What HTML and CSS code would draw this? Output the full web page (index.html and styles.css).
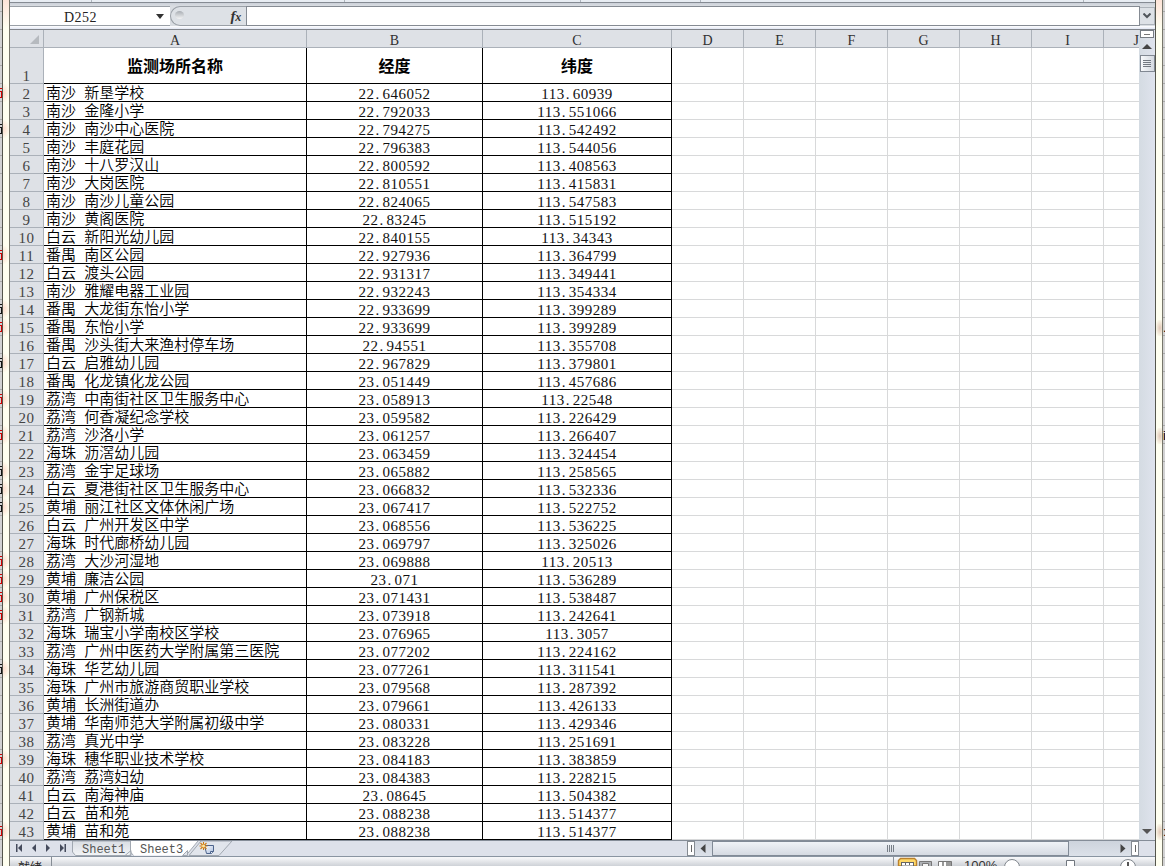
FILE: index.html
```html
<!DOCTYPE html>
<html lang="zh-CN">
<head>
<meta charset="utf-8">
<title>Sheet3</title>
<link rel="stylesheet" href="styles.css">
</head>
<body>
<div class="desktop">
  <div class="behind-left" id="behind"></div>
  <div class="frame frame-left" id="frame"></div>
  <main class="window">
    <div class="ribbon-edge"><i></i><i></i><i></i><i></i><i></i></div>
    <div class="formula-bar">
      <div class="name-box"><span>D252</span><svg width="8" height="5" viewBox="0 0 8 5"><path d="M0 0h8L4 5z" fill="#333"/></svg></div>
      <div class="fx-area"><span class="knob"></span><span class="fx">f<small>x</small></span></div>
      <div class="formula-input"></div>
      <div class="expand"><svg width="8" height="6" viewBox="0 0 8 6"><path d="M.5.5L4 4 7.500.5" fill="none" stroke="#50555b" stroke-width="2"/></svg></div>
    </div>
    <div class="work">
      <div class="sheet" id="sheet"></div>
      <div class="vscroll">
        <div class="splitter-h"><i></i></div>
        <svg class="up" width="10" height="5" viewBox="0 0 10 5"><path d="M0 5L5 0l5 5z" fill="#444"/></svg>
        <div class="vthumb"><i></i><i></i><i></i><i></i></div>
        <svg class="down" width="10" height="5" viewBox="0 0 10 5"><path d="M0 0h10L5 5z" fill="#555"/></svg>
      </div>
    </div>
    <div class="tabbar">
      <svg class="tabs" width="680" height="15" viewBox="0 0 680 15">
        <defs>
          <linearGradient id="tabFill" x2="0" y2="1"><stop stop-color="#d9dde3"/><stop offset="1" stop-color="#f2f4f7"/></linearGradient>
          <linearGradient id="pageFill" x2="1" y2="1"><stop stop-color="#fff"/><stop offset="1" stop-color="#a9bdde"/></linearGradient>
        </defs>
        <g fill="#454b5c">
          <path d="M6 3h1.500v8H6zM12 3v8L8 7zM26 3v8l-4-4zM36 3v8l4-4zM50 3v8l4-4zM54.500 3H56v8h-1.500z"/>
        </g>
        <path d="M62.500 0v11l3 3.500h54l3-4V0z" fill="url(#tabFill)" stroke="#a1a8b1"/>
        <path d="M179 14.500L191 0h31L209 14.500z" fill="#e1e5ec" stroke="#a1a8b1"/>
        <path d="M120.500 0v11l3 3.500h53L188 0z" fill="#fff"/>
        <path d="M120.500 0v11l3 3.500M176 14.500L188 0M115 14.500h6v-5z" fill="none" stroke="#a1a8b1"/>
        <path d="M172.500 14.500h5v-5z" fill="#e1e5ec" stroke="#a1a8b1"/>
        <text x="72" y="12" class="tab-label">Sheet1</text>
        <text x="130" y="12" class="tab-label">Sheet3</text>
        <path d="M194.500 4.500h9v6l-2 2h-5z" fill="url(#pageFill)" stroke="#4d648c"/>
        <path d="M200.500 12.500v-2h3" fill="#f4f7ff" stroke="#4d648c"/>
        <path d="M193.500 1v8M189.500 5h8M190.500 2l6 6M196.500 2l-6 6" stroke="#cf7c11" stroke-width="1.100"/>
        <circle cx="193.500" cy="5" r="1.500" fill="#ffe6a0"/>
      </svg>
      <div class="split-v"><i></i></div>
      <div class="hscroll">
        <svg width="6" height="9" viewBox="0 0 6 9"><path d="M5.500 0v9L.5 4.500z" fill="#444"/></svg>
        <div class="hthumb"><i></i><i></i><i></i><i></i></div>
        <svg class="right" width="6" height="9" viewBox="0 0 6 9"><path d="M.5 0v9l5-4.500z" fill="#444"/></svg>
      </div>
      <div class="split-v end"><i></i></div>
      <div class="corner"></div>
    </div>
    <div class="status">
      <span class="ready">就绪</span>
      <svg class="views" width="260" height="9" viewBox="0 0 260 9">
        <path d="M8.500 0v9" stroke="#8b929b"/>
        <path d="M13.500 9V3.500l2-2h14l2 2V9z" fill="#ffd968" stroke="#ba812d" stroke-width="1.400"/>
        <path d="M16 9V5h13v4" fill="#666"/>
        <path d="M17 6h3v2h-3zM21 6h3v2h-3zM25 6h3v2h-3zM17 8.500h11V9H17z" fill="#fff"/>
        <path d="M34.500 9V4.500h12V9" fill="#aeb1b5" stroke="#777"/>
        <path d="M37.500 9V6.500h6V9" fill="#f5f5f5" stroke="#777"/>
        <path d="M53.500 9V4.500h13V9" fill="#999" stroke="#777"/>
        <path d="M54 5h3v4h-3zM59 5h2v4h-2z" fill="#fff"/>
        <text x="79" y="13" class="zoom-label">100%</text>
        <circle cx="127" cy="10" r="7.500" fill="#fff" stroke="#81878e"/>
        <path d="M181.500 9V3.500h8V9" fill="#fff" stroke="#70767e"/>
        <circle cx="243" cy="10" r="7.500" fill="#fff" stroke="#81878e"/>
        <path d="M243 5v4" stroke="#555" stroke-width="2"/>
      </svg>
    </div>
  </main>
  <div class="frame frame-right"><i></i><i></i><i></i></div>
  <div class="behind-right"><span>.</span><span>i</span><span>:</span></div>
</div>
<script src="script.js"></script>
</body>
</html>
```

FILE: styles.css
```css
* { box-sizing: border-box; }
body { margin: 0; overflow: hidden; background: #fff; }
.desktop { display: flex; width: 1165px; height: 866px; }
.behind-left, .behind-right {
  flex: none;
  overflow: hidden;
  background: repeating-linear-gradient(#d2d2d3 0 11px, #aaa 11px 12px, #d2d2d3 12px 18px);
}
.behind-left { width: 2px; padding-top: 84px; }
.behind-right { position: relative; width: 2px; }
.behind-right span { position: absolute; left: 0; font: 13px "Liberation Sans", sans-serif; }
.behind-right span:nth-child(1) { top: 320px; }
.behind-right span:nth-child(2) { top: 428px; }
.behind-right span:nth-child(3) { top: 824px; }
.mark { height: 18px; color: #111; }
.mark svg { display: block; }
.mark.red { color: #d00000; }
.frame {
  flex: none;
  width: 8px;
  background: linear-gradient(#fde4d8 0, #fff0e4 13px, #fffff0 28px);
  border-left: 1px solid #55564d;
  border-right: 1px solid #77766b;
}
.frame-left { padding-top: 84px; }
.frame-left i { display: block; height: 18px; }
.frame-left i.glow { background: radial-gradient(ellipse at left, #fbdacb, transparent 80%); }
.frame-right { position: relative; }
.frame-right i {
  position: absolute;
  right: 0;
  width: 6px;
  height: 16px;
  background: radial-gradient(ellipse at 65% 50%, #e1c8b8, #fffff000 85%);
}
.frame-right i:nth-child(1) { top: 320px; }
.frame-right i:nth-child(2) { top: 428px; }
.frame-right i:nth-child(3) { top: 824px; }
.window { flex: none; display: flex; flex-direction: column; width: 1145px; background: #d8dfe7; }
.ribbon-edge {
  display: grid;
  grid-template-columns: 82px 253px 236px 120px 383px 1fr;
  flex: none;
  height: 3px;
  background: #e8edf3;
  border-bottom: 1px solid #858b93;
}
.ribbon-edge i { border-right: 1px solid #aeb5bd; }
.formula-bar {
  display: flex;
  flex: none;
  height: 27px;
  padding: 3px 0 3px;
  background: linear-gradient(#cbd0d8 0, #d9dde2 3px, #d9dde2 23px, #fff 23px, #e2e7f4 26px, #81858b 26px);
}
.name-box {
  display: flex;
  align-items: center;
  justify-content: space-between;
  width: 160px;
  height: 20px;
  padding: 0 6px 0 54px;
  border-top: 1px solid #9aa0a7;
  border-bottom: 1px solid #9aa0a7;
  background: #fff;
  color: #222;
  font: 14px/19px "Liberation Serif", serif;
}
.name-box span { letter-spacing: .5px; padding-top: 2px; }
.fx-area {
  display: flex;
  align-items: center;
  justify-content: space-between;
  width: 76px;
  height: 20px;
  padding: 0 5px 0 4px;
  border: 1px solid #9aa0a7;
  border-right: 0;
  border-radius: 10px 0 0 10px;
  background: #dde1e6;
}
.knob { width: 9px; height: 8px; margin-top: -3px; border-radius: 50%; background: linear-gradient(#a8adb3, #f3f4f5); }
.fx { font: italic bold 15px/16px "Liberation Serif", serif; color: #333; letter-spacing: -.3px; }
.fx small { font-size: 12px; }
.formula-input { flex: 1; height: 20px; border: 1px solid #858b93; background: #fff; }
.expand { display: flex; align-items: center; justify-content: center; width: 15px; height: 18px; margin-top: 1px; border: 1px solid #adb3ba; border-left: 0; background: #dde1e6; }
.work { display: flex; flex: none; height: 810px; overflow: hidden; }
.sheet { width: 1129px; overflow: hidden; background: #fff; color: #000; }
.row { display: grid; grid-template-columns: 34px 263px 176px 189px repeat(6, 72px) 35px; height: 18px; }
.row.first { height: 36px; }
.cell {
  overflow: hidden;
  border-right: 1px solid #d8d9da;
  border-bottom: 1px solid #d8d9da;
  white-space: pre;
  text-align: center;
}
.cell:last-child { border-right: 0; }
.head .cell, .cell.row-no { border-color: #abb1b9; background: #dee1e6; color: #303030; }
.head .cell { font: 14px/21px "Liberation Serif", serif; }
.head .cell:last-child { text-align: right; }
.head .cell:first-child { display: flex; justify-content: flex-end; align-items: flex-end; padding: 0 4px 3px; }
.cell.row-no { font: 15px/20px "Liberation Serif", serif; letter-spacing: .5px; color: #444; }
.first .cell.row-no { padding-top: 18px; }
.cell.data { border-color: #000; }
.cell.place { padding-left: 2px; font: 350 15px/16px "Noto Sans CJK SC", sans-serif; text-align: left; word-spacing: 4.8px; }
.cell.num { font: 15px/20px "Liberation Serif", serif; letter-spacing: .5px; color: #111; }
.cell.num b { display: inline-block; width: 8px; font-weight: 400; text-align: left; padding-left: 1px; }
.cell.title { font: bold 16px/35px "Noto Sans CJK SC", sans-serif; }
.vscroll { display: flex; flex-direction: column; align-items: center; width: 16px; background: linear-gradient(90deg, #d4dbe2, #dfe3ed); }
.splitter-h { width: 14px; height: 8px; padding: 3px 3px; border: 1px solid #777d84; background: #fff; }
.splitter-h i { display: block; height: 1px; background: #777; }
.up { margin-top: 6px; flex: none; }
.vthumb { display: grid; gap: 1px; align-content: center; justify-content: center; width: 15px; height: 17px; margin-top: 6px; border: 1px solid #818892; background: linear-gradient(90deg, #f7f9fb, #d4d9e0); }
.vthumb i { width: 8px; height: 1px; background: #737981; }
.down { margin-top: auto; margin-bottom: 6px; }
.tabbar { display: flex; flex: none; height: 17px; border-top: 1px solid #858d98; border-bottom: 1px solid #8994a1; background: #dde1ea; }
.tabs { flex: none; }
.tab-label { font: 12px "Liberation Mono", monospace; fill: #555; }
.split-v { flex: none; width: 8px; margin-left: -3px; height: 15px; padding: 3px 3px; border: 1px solid #858b92; background: #fff; }
.split-v i { display: block; width: 1px; height: 7px; background: #666; }
.hscroll { display: flex; flex: 1; align-items: center; padding-left: 5px; background: linear-gradient(#cdd3dc, #dce1e9); }
.hthumb { display: flex; justify-content: center; align-items: center; gap: 1px; width: 357px; height: 15px; margin-left: 6px; border: 1px solid #818a96; background: linear-gradient(#f0f3f7, #d5dae2); }
.hthumb i { width: 1px; height: 7px; background: #777e87; }
.right { margin-left: auto; margin-right: 5px; }
.split-v.end { margin-left: 0; }
.corner { width: 16px; }
.status { display: flex; justify-content: space-between; flex: none; height: 9px; overflow: hidden; background: linear-gradient(#f5f6f8 0 1px, #ced2d7 9px); }
.ready { width: 42px; padding: 2px 0 0 8px; border-right: 1px solid #868d95; font: 12px/16px "Noto Sans CJK SC", sans-serif; color: #222; }
.views { flex: none; margin-right: 10px; }
.zoom-label { font: 13px "Liberation Sans", sans-serif; fill: #333; }
```

FILE: script.js
```js
const places = `南沙 新垦学校|22.646052|113.60939
南沙 金隆小学|22.792033|113.551066
南沙 南沙中心医院|22.794275|113.542492
南沙 丰庭花园|22.796383|113.544056
南沙 十八罗汉山|22.800592|113.408563
南沙 大岗医院|22.810551|113.415831
南沙 南沙儿童公园|22.824065|113.547583
南沙 黄阁医院|22.83245|113.515192
白云 新阳光幼儿园|22.840155|113.34343
番禺 南区公园|22.927936|113.364799
白云 渡头公园|22.931317|113.349441
南沙 雅耀电器工业园|22.932243|113.354334
番禺 大龙街东怡小学|22.933699|113.399289
番禺 东怡小学|22.933699|113.399289
番禺 沙头街大来渔村停车场|22.94551|113.355708
白云 启雅幼儿园|22.967829|113.379801
番禺 化龙镇化龙公园|23.051449|113.457686
荔湾 中南街社区卫生服务中心|23.058913|113.22548
荔湾 何香凝纪念学校|23.059582|113.226429
荔湾 沙洛小学|23.061257|113.266407
海珠 沥滘幼儿园|23.063459|113.324454
荔湾 金宇足球场|23.065882|113.258565
白云 夏港街社区卫生服务中心|23.066832|113.532336
黄埔 丽江社区文体休闲广场|23.067417|113.522752
白云 广州开发区中学|23.068556|113.536225
海珠 时代廊桥幼儿园|23.069797|113.325026
荔湾 大沙河湿地|23.069888|113.20513
黄埔 廉洁公园|23.071|113.536289
黄埔 广州保税区|23.071431|113.538487
荔湾 广钢新城|23.073918|113.242641
海珠 瑞宝小学南校区学校|23.076965|113.3057
荔湾 广州中医药大学附属第三医院|23.077202|113.224162
海珠 华艺幼儿园|23.077261|113.311541
海珠 广州市旅游商贸职业学校|23.079568|113.287392
黄埔 长洲街道办|23.079661|113.426133
黄埔 华南师范大学附属初级中学|23.080331|113.429346
荔湾 真光中学|23.083228|113.251691
海珠 穗华职业技术学校|23.084183|113.383859
荔湾 荔湾妇幼|23.084383|113.228215
白云 南海神庙|23.08645|113.504382
白云 苗和苑|23.088238|113.514377
黄埔 苗和苑|23.088238|113.514377`.split('\n').map(line => line.split('|'));

const cell = (cls, html = '') => `<div class="cell ${cls}">${html}</div>`;
const blanks = cell('').repeat(7);
const coord = value => value.replace('.', '<b>.</b>');
const corner = '<svg width="9" height="9" viewBox="0 0 9 9"><path d="M9 0v9H0z" fill="#b6babf"/></svg>';

let html = `<div class="row head">${cell('', corner)}${[...'ABCDEFGHIJ'].map(c => cell('', c)).join('')}</div>`;
html += `<div class="row first">${cell('row-no', '1')}${['监测场所名称', '经度', '纬度'].map(t => cell('data title', t)).join('')}${blanks}</div>`;
places.forEach(([name, a, b], i) => {
  html += `<div class="row">${cell('row-no', i + 2)}${cell('data place', name)}${cell('data num', coord(a))}${cell('data num', coord(b))}${blanks}</div>`;
});
document.getElementById('sheet').innerHTML = html;

// Edge of the window behind, visible on the left
const red = [0, 9, 13, 17, 19, 26, 27, 28, 29, 37, 41];
const black = [2, 12, 15, 21, 22, 23, 32];
const sliver = '<svg width="2" height="18" viewBox="0 0 2 18"><path d="M0 4h2v1H0zM0 7h2v7H0v-1h1V8H0z" fill="currentColor"/></svg>';
let marks = '', glows = '';
for (let i = 0; i < 42; i++) {
  const on = red.includes(i) || black.includes(i);
  marks += `<div class="mark${red.includes(i) ? ' red' : ''}">${on ? sliver : ''}</div>`;
  glows += `<i class="${on ? 'glow' : ''}"></i>`;
}
document.getElementById('behind').innerHTML = marks;
document.getElementById('frame').innerHTML = glows;
```
